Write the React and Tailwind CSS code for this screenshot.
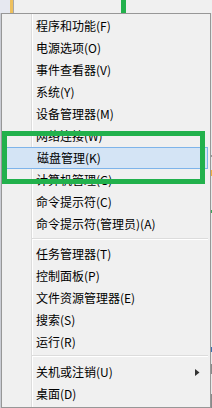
import React from 'react';

const groups = [
  [
    '程序和功能(F)',
    '电源选项(O)',
    '事件查看器(V)',
    '系统(Y)',
    '设备管理器(M)',
    '网络连接(W)',
    '磁盘管理(K)',
    '计算机管理(G)',
    '命令提示符(C)',
    '命令提示符(管理员)(A)',
  ],
  ['任务管理器(T)', '控制面板(P)', '文件资源管理器(E)', '搜索(S)', '运行(R)'],
  ['关机或注销(U)', '桌面(D)'],
];

const Item = ({ label, active, submenu }) => (
  <div
    className={`relative ml-[1px] mr-[2px] flex h-[22px] items-center pl-[33px] ${
      active ? 'border border-[#7eb4ea] bg-[#d4e4f5] pl-[32px]' : ''
    }`}
  >
    <span className="leading-none">{label}</span>
    {submenu && (
      <svg className="absolute left-[192px] top-[8px]" width="5" height="7" viewBox="0 0 5 7">
        <polygon points="0,0 4.5,3.5 0,7" fill="#333" />
      </svg>
    )}
  </div>
);

const Separator = ({ top }) => (
  <div className={`flex h-[8px] flex-col pl-[30px] pr-[2px] ${top}`}>
    <div className="h-[1px] bg-[#dcdcdc]" />
    <div className="h-[1px] bg-white" />
  </div>
);

export default function App() {
  return (
    <div className="relative h-[408px] w-[212px] overflow-hidden bg-[#f0f0f0] font-['Noto_Sans_CJK_SC',sans-serif] text-[12px] text-black">
      {/* window behind the menu */}
      <div className="flex h-[13px]">
        <div className="w-[10px] bg-[#e6e8f0]" />
        <div className="w-[3px] bg-[#eec05e]" />
        <div className="w-[1px] bg-[#a8a8a8]" />
        <div className="w-[107px]" />
        <div className="w-[5px] bg-[#22b14c]" />
      </div>

      <div className="flex">
        <div className="w-[1px] bg-[#c9ccd4]" />
        <div className="w-[210px] border border-[#979797] bg-[#f0f0f0] py-[1px] bg-[linear-gradient(to_right,transparent_29px,#dcdcdc_29px,#dcdcdc_30px,#ffffff_30px,#ffffff_31px,transparent_31px)]">
          {groups[0].map((l) => (
            <Item key={l} label={l} active={l === '磁盘管理(K)'} />
          ))}
          <Separator top="pt-[3px]" />
          {groups[1].map((l) => (
            <Item key={l} label={l} />
          ))}
          <Separator top="h-[7px] pt-[2px]" />
          {groups[2].map((l, i) => (
            <Item key={l} label={l} submenu={i === 0} />
          ))}
        </div>
        <div className="flex w-[1px] flex-col">
          <div className="h-[142px] bg-[#e8e8e8]" />
          <div className="h-[2px] bg-[#9a9a9a]" />
          <div className="h-[13px] bg-[#e8e8e8]" />
          <div className="h-[6px] bg-[#f0b040]" />
          <div className="h-[34px] bg-[#e8e8e8]" />
          <div className="h-[3px] bg-[#3aa35a]" />
          <div className="h-[134px] bg-[#e8e8e8]" />
          <div className="h-[5px] bg-[#3a6fb0]" />
          <div className="h-[12px] bg-[#e8e8e8]" />
          <div className="h-[10px] bg-[#8a8a8a]" />
          <div className="h-[20px] bg-[#e8e8e8]" />
          <div className="h-[14px] bg-[#8a8a8a]" />
        </div>
      </div>

      {/* annotation frame */}
      <div className="absolute left-[2px] top-[131px] h-[53px] w-[203px] border-[5px] border-[#22b14c]" />
    </div>
  );
}
